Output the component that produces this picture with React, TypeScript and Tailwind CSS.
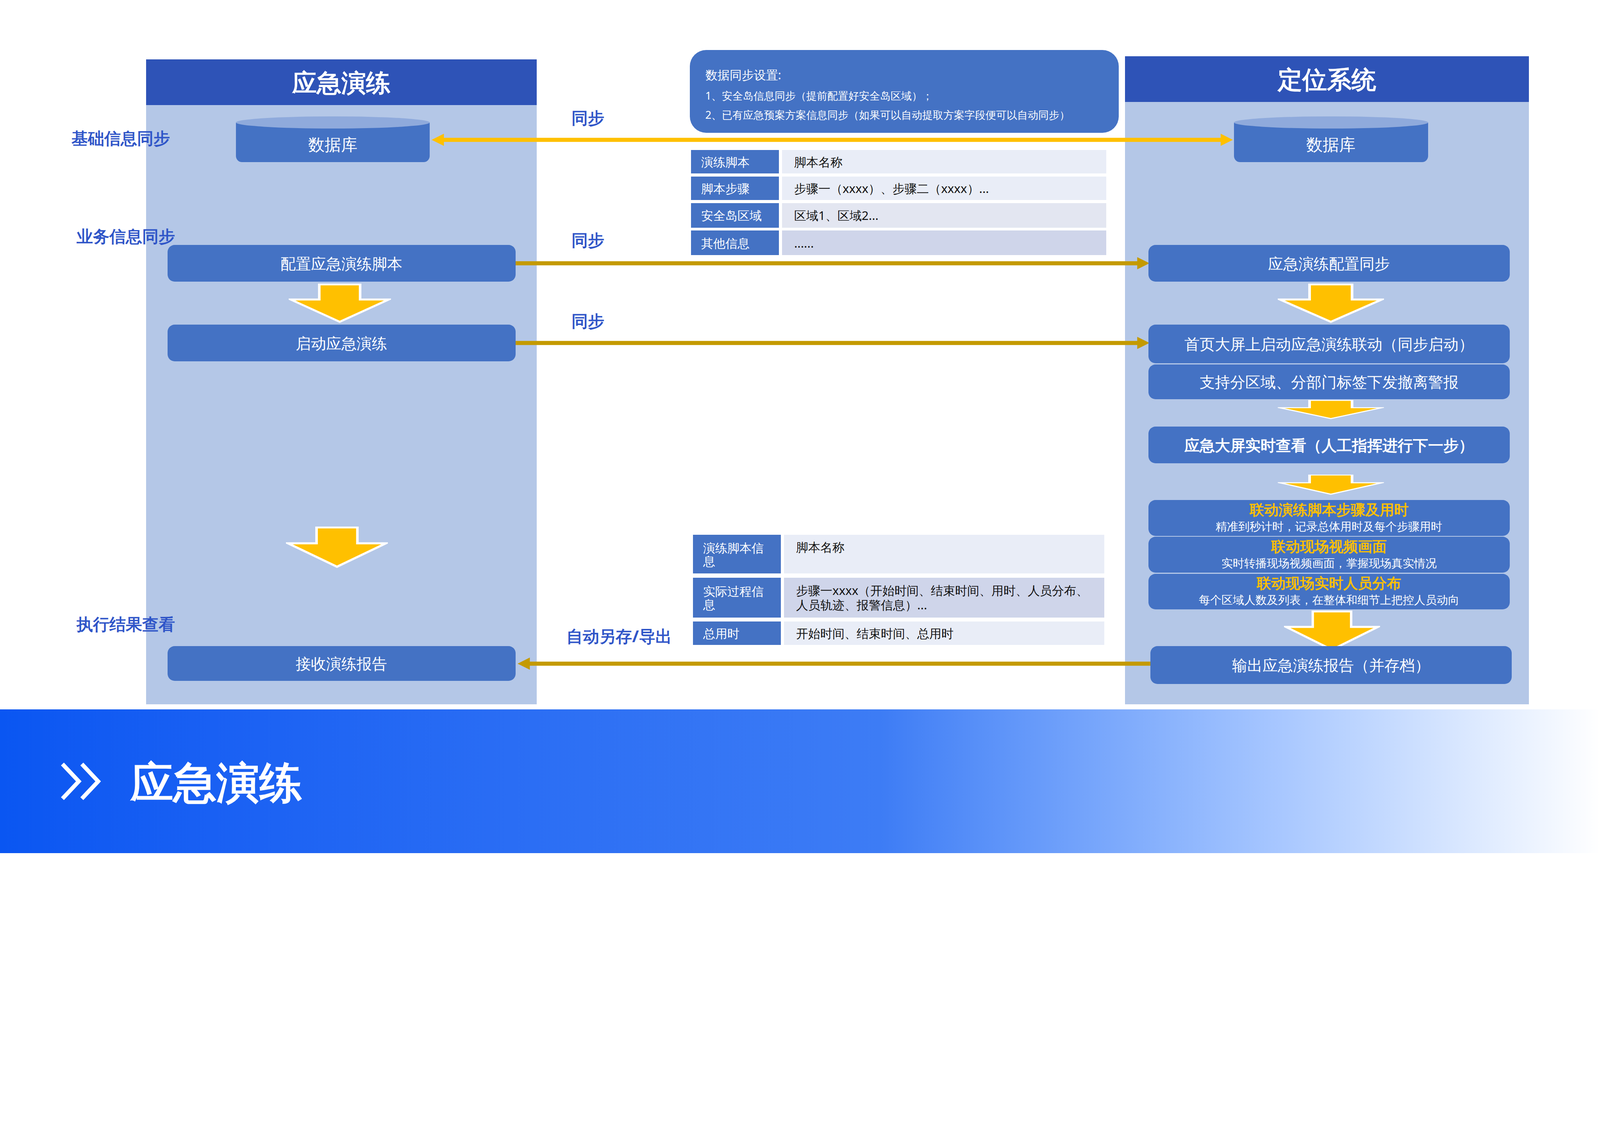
const font = "font-['Noto_Sans_CJK_SC','Noto_Sans',sans-serif]";

function DownArrow({ x, y, w, h }: { x: number; y: number; w: number; h: number }) {
  return (
    <svg className="absolute" style={{ left: x, top: y }} width={w} height={h} viewBox="0 0 100 50" preserveAspectRatio="none">
      <polygon points="30,1 70,1 70,20 98,20 50,48 2,20 30,20" fill="#ffc000" stroke="#fff" strokeWidth="2.5" strokeLinejoin="miter" />
    </svg>
  );
}

function HLine({ x1, x2, y, color, left, right }: { x1: number; x2: number; y: number; color: string; left?: boolean; right?: boolean }) {
  return (
    <svg className="absolute" style={{ left: x1, top: y - 8 }} width={x2 - x1} height={16}>
      <line x1={left ? 8 : 0} y1={8} x2={x2 - x1 - (right ? 8 : 0)} y2={8} stroke={color} strokeWidth={4} />
      {left && <polygon points="0,8 12,2 12,14" fill={color} />}
      {right && <polygon points={`${x2 - x1},8 ${x2 - x1 - 12},2 ${x2 - x1 - 12},14`} fill={color} />}
    </svg>
  );
}

function Box({ x, y, w, h, children, className = "" }: { x: number; y: number; w: number; h: number; children: React.ReactNode; className?: string }) {
  return (
    <div className={`absolute flex flex-col items-center justify-center rounded-[7px] bg-[#4472c4] text-white ${className}`} style={{ left: x, top: y, width: w, height: h }}>
      {children}
    </div>
  );
}

function Db({ x }: { x: number }) {
  return (
    <div className="absolute" style={{ left: x, top: 114, width: 190, height: 45 }}>
      <div className="absolute inset-x-0 top-[6px] bottom-0 rounded-b-[6px] bg-[#4472c4]" />
      <div className="absolute inset-x-0 top-0 h-[12px] rounded-[50%] bg-[#8faadc]" />
      <div className="absolute inset-x-0 top-[10px] bottom-0 flex items-center justify-center text-[16px] text-white">数据库</div>
    </div>
  );
}

function Label({ x, y, children }: { x: number; y: number; children: React.ReactNode }) {
  return (
    <div className="absolute text-[16px] font-bold text-[#2f55c8] leading-none" style={{ left: x, top: y }}>
      {children}
    </div>
  );
}

function Row({ label, value, h, bg }: { label: string; value: string; h: number; bg: string }) {
  return (
    <div className="flex gap-[3px]" style={{ height: h }}>
      <div className="w-[86px] shrink-0 bg-[#4472c4] px-[10px] flex items-center text-[12px] leading-[13px] text-white">{label}</div>
      <div className={`flex-1 px-[12px] flex items-center text-[12px] leading-[14px] text-[#111] ${bg}`}>{value}</div>
    </div>
  );
}

export default function App() {
  return (
    <div className={`w-full min-h-screen overflow-hidden bg-white ${font}`}>
      <div className="relative w-[1568px] h-[836px] [zoom:2.613]">
        {/* left panel */}
        <div className="absolute left-[143px] top-[58px] w-[383px] h-[632px] bg-[#b4c7e7]">
          <div className="h-[45px] bg-[#2e53b7] flex items-center justify-center text-[24px] font-bold text-white">应急演练</div>
        </div>
        {/* right panel */}
        <div className="absolute left-[1102px] top-[55px] w-[396px] h-[635px] bg-[#b4c7e7]">
          <div className="h-[45px] bg-[#2e53b7] flex items-center justify-center text-[24px] font-bold text-white">定位系统</div>
        </div>

        {/* info box */}
        <div className="absolute left-[676px] top-[49px] w-[420px] h-[81px] rounded-[16px] bg-[#4472c4] px-[15px] pt-[16px] text-white">
          <div className="text-[12px] leading-[16px]">数据同步设置:</div>
          <div className="mt-[5px] text-[10.5px] leading-[15px]">1、安全岛信息同步（提前配置好安全岛区域）；</div>
          <div className="mt-[4px] text-[10.5px] leading-[15px]">2、已有应急预案方案信息同步（如果可以自动提取方案字段便可以自动同步）</div>
        </div>

        <Db x={231} />
        <Db x={1209} />

        <Label x={70} y={127}>基础信息同步</Label>
        <Label x={75} y={223}>业务信息同步</Label>
        <Label x={75} y={603}>执行结果查看</Label>
        <Label x={560} y={107}>同步</Label>
        <Label x={560} y={227}>同步</Label>
        <Label x={560} y={306}>同步</Label>
        <Label x={555} y={615}>自动另存/导出</Label>

        <HLine x1={423} x2={1208} y={137} color="#ffc000" left right />
        <HLine x1={505} x2={1126} y={258} color="#c49a00" right />
        <HLine x1={505} x2={1126} y={336} color="#c49a00" right />
        <HLine x1={507} x2={1128} y={650} color="#c49a00" left />

        {/* table 1 */}
        <div className="absolute left-[677px] top-[147px] w-[407px] flex flex-col gap-[3px]">
          <Row label="演练脚本" value="脚本名称" h={23} bg="bg-[#e9edf7]" />
          <Row label="脚本步骤" value="步骤一（xxxx）、步骤二（xxxx）..." h={23} bg="bg-[#e9edf7]" />
          <Row label="安全岛区域" value="区域1、区域2..." h={24} bg="bg-[#e3e6f1]" />
          <Row label="其他信息" value="......" h={24} bg="bg-[#cfd5ea]" />
        </div>

        {/* table 2 */}
        <div className="absolute left-[679px] top-[524px] w-[403px] flex flex-col gap-[4px]">
          <Row label="演练脚本信息" value="脚本名称" h={38} bg="bg-[#e9edf7] !items-start pt-[5px]" />
          <Row label="实际过程信息" value="步骤一xxxx（开始时间、结束时间、用时、人员分布、人员轨迹、报警信息）..." h={39} bg="bg-[#cfd5ea]" />
          <Row label="总用时" value="开始时间、结束时间、总用时" h={23} bg="bg-[#e9edf7]" />
        </div>

        {/* left flow */}
        <Box x={164} y={240} w={341} h={36} className="text-[15px]">配置应急演练脚本</Box>
        <DownArrow x={283} y={278} w={100} h={39} />
        <Box x={164} y={318} w={341} h={36} className="text-[15px]">启动应急演练</Box>
        <DownArrow x={280} y={516} w={100} h={41} />
        <Box x={164} y={633} w={341} h={34} className="text-[15px]">接收演练报告</Box>

        {/* right flow */}
        <Box x={1125} y={240} w={354} h={36} className="text-[15px]">应急演练配置同步</Box>
        <DownArrow x={1252} y={278} w={104} h={39} />
        <Box x={1125} y={318} w={354} h={38} className="text-[15px]">首页大屏上启动应急演练联动（同步启动）</Box>
        <Box x={1125} y={357} w={354} h={34} className="text-[15px]">支持分区域、分部门标签下发撤离警报</Box>
        <DownArrow x={1252} y={392} w={104} h={19} />
        <Box x={1125} y={418} w={354} h={36} className="text-[15px] font-bold text-[#ffc000]">应急大屏实时查看（人工指挥进行下一步）</Box>
        <DownArrow x={1252} y={465} w={104} h={20} />
        <Box x={1125} y={490} w={354} h={35} className="leading-[16px]">
          <div className="text-[14px] font-bold text-[#ffc000]">联动演练脚本步骤及用时</div>
          <div className="text-[11px]">精准到秒计时，记录总体用时及每个步骤用时</div>
        </Box>
        <Box x={1125} y={526} w={354} h={35} className="leading-[16px]">
          <div className="text-[14px] font-bold text-[#ffc000]">联动现场视频画面</div>
          <div className="text-[11px]">实时转播现场视频画面，掌握现场真实情况</div>
        </Box>
        <Box x={1125} y={562} w={354} h={35} className="leading-[16px]">
          <div className="text-[14px] font-bold text-[#ffc000]">联动现场实时人员分布</div>
          <div className="text-[11px]">每个区域人数及列表，在整体和细节上把控人员动向</div>
        </Box>
        <DownArrow x={1258} y={598} w={94} h={40} />
        <Box x={1127} y={633} w={354} h={37} className="text-[15px]">输出应急演练报告（并存档）</Box>

        {/* banner */}
        <div className="absolute left-0 top-[695px] w-[1568px] h-[141px] bg-gradient-to-r from-[#0a56f2] via-[#3d7cf5] via-55% to-white flex items-center pl-[58px] gap-[26px]">
          <svg width="44" height="40" viewBox="0 0 44 40">
            <polyline points="3,3 19,20 3,37" fill="none" stroke="#fff" strokeWidth="4" />
            <polyline points="22,3 38,20 22,37" fill="none" stroke="#fff" strokeWidth="4" />
          </svg>
          <div className="text-[42px] font-bold text-white leading-none">应急演练</div>
        </div>
      </div>
    </div>
  );
}
